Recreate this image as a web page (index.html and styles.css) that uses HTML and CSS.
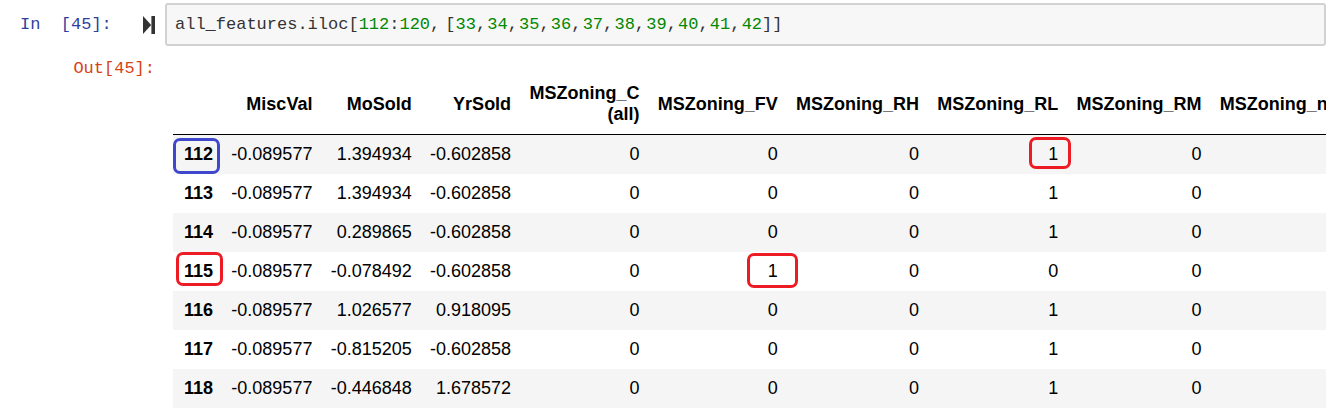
FILE: index.html
```html
<!DOCTYPE html>
<html>
<head>
<meta charset="utf-8">
<link rel="stylesheet" href="styles.css">
</head>
<body>
<div class="cell">
  <div class="input">
    <div class="prompt prompt-in">In&nbsp;&nbsp;[45]:</div>
    <div class="run">
      <svg width="12" height="18" viewBox="0 0 12 18"><polygon points="0,0 8.2,9 0,18" fill="#333"/><rect x="8.4" y="0" width="3.6" height="18" fill="#333"/></svg>
    </div>
    <div class="code"><span>all_features.iloc[</span><span class="num">112</span><span>:</span><span class="num">120</span><span class="sep sep-wide">,</span><span>[</span><span class="num">33</span><span class="sep">,</span><span class="num">34</span><span class="sep">,</span><span class="num">35</span><span class="sep">,</span><span class="num">36</span><span class="sep">,</span><span class="num">37</span><span class="sep">,</span><span class="num">38</span><span class="sep">,</span><span class="num">39</span><span class="sep">,</span><span class="num">40</span><span class="sep">,</span><span class="num">41</span><span class="sep">,</span><span class="num">42</span><span>]]</span></div>
  </div>
  <div class="output">
    <div class="prompt prompt-out">Out[45]:</div>
    <div class="result">
      <table class="dataframe">
        <thead>
          <tr><th></th><th>MiscVal</th><th>MoSold</th><th>YrSold</th><th>MSZoning_C<br>(all)</th><th>MSZoning_FV</th><th>MSZoning_RH</th><th>MSZoning_RL</th><th>MSZoning_RM</th><th>MSZoning_nan</th></tr>
        </thead>
        <tbody>
          <tr><th>112</th><td>-0.089577</td><td>1.394934</td><td>-0.602858</td><td>0</td><td>0</td><td>0</td><td>1</td><td>0</td><td>0</td></tr>
          <tr><th>113</th><td>-0.089577</td><td>1.394934</td><td>-0.602858</td><td>0</td><td>0</td><td>0</td><td>1</td><td>0</td><td>0</td></tr>
          <tr><th>114</th><td>-0.089577</td><td>0.289865</td><td>-0.602858</td><td>0</td><td>0</td><td>0</td><td>1</td><td>0</td><td>0</td></tr>
          <tr><th>115</th><td>-0.089577</td><td>-0.078492</td><td>-0.602858</td><td>0</td><td>1</td><td>0</td><td>0</td><td>0</td><td>0</td></tr>
          <tr><th>116</th><td>-0.089577</td><td>1.026577</td><td>0.918095</td><td>0</td><td>0</td><td>0</td><td>1</td><td>0</td><td>0</td></tr>
          <tr><th>117</th><td>-0.089577</td><td>-0.815205</td><td>-0.602858</td><td>0</td><td>0</td><td>0</td><td>1</td><td>0</td><td>0</td></tr>
          <tr><th>118</th><td>-0.089577</td><td>-0.446848</td><td>1.678572</td><td>0</td><td>0</td><td>0</td><td>1</td><td>0</td><td>0</td></tr>
        </tbody>
      </table>
    </div>
  </div>
  <div class="mark mark-blue mark-112"></div>
  <div class="mark mark-red mark-115"></div>
  <div class="mark mark-red mark-rl"></div>
  <div class="mark mark-red mark-fv"></div>
</div>
</body>
</html>
```
FILE: styles.css
```css
html, body {
  margin: 0;
  padding: 0;
  background: #fff;
}
body {
  width: 1344px;
  height: 411px;
  overflow: hidden;
}
.cell {
  position: relative;
  padding-top: 3px;
}
.input {
  display: flex;
  align-items: center;
  height: 43px;
}
.prompt {
  font-family: "Liberation Mono", monospace;
  font-size: 17px;
  line-height: 20px;
  white-space: pre;
  box-sizing: border-box;
}
.prompt-in {
  width: 143px;
  padding-left: 20px;
  color: #303F9F;
}
.run {
  width: 22px;
  display: flex;
  align-items: center;
  height: 18px;
}
.run svg {
  display: block;
}
.code {
  flex: 1;
  margin-right: 18px;
  height: 43px;
  box-sizing: border-box;
  border: 2px solid #d2d2d2;
  border-radius: 3px;
  background: #f7f7f7;
  padding: 0 8px;
  display: flex;
  align-items: center;
  font-family: "Liberation Mono", monospace;
  font-size: 17px;
  color: #333;
  white-space: pre;
}
.code .num {
  color: #080;
}
.code .sep {
  margin-right: 1.2px;
}
.code .sep-wide {
  margin-right: 5px;
}
.output {
  display: flex;
  margin-top: 10px;
}
.prompt-out {
  width: 173px;
  flex: none;
  padding: 3px 18px 0 0;
  text-align: right;
  color: #D84315;
}
.result {
  flex: 1;
  margin-right: 18px;
  overflow: hidden;
  padding-top: 18px;
}
.dataframe {
  border-collapse: collapse;
  border-spacing: 0;
  font-family: "Liberation Sans", Arial, sans-serif;
  font-size: 18px;
  color: #000;
  white-space: nowrap;
}
.dataframe th,
.dataframe td {
  padding: 9px 9.15px;
  text-align: right;
  vertical-align: middle;
  line-height: normal;
}
.dataframe tr > th:first-child {
  padding-left: 11px;
}
.dataframe th {
  font-weight: bold;
}
.dataframe thead th {
  border-bottom: 1px solid #000;
}
.dataframe tbody tr:nth-child(odd) {
  background: #f5f5f5;
}
.mark {
  position: absolute;
  box-sizing: border-box;
  border: 3px solid;
  border-radius: 7px;
}
.mark-blue {
  border-color: #3f48cc;
}
.mark-red {
  border-color: #ed1c24;
}
.mark-112 {
  left: 173px;
  top: 138px;
  width: 47px;
  height: 36px;
}
.mark-115 {
  left: 176px;
  top: 252px;
  width: 47px;
  height: 34px;
}
.mark-rl {
  left: 1029px;
  top: 137px;
  width: 42px;
  height: 32px;
}
.mark-fv {
  left: 747px;
  top: 253px;
  width: 51px;
  height: 35px;
}
```
